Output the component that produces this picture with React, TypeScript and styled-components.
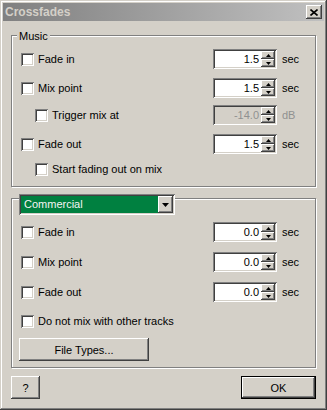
import styled, { createGlobalStyle } from "styled-components";

const face = "#d4d0c8";

const GlobalStyle = createGlobalStyle`
  body {
    margin: 0;
    background: ${face};
  }
`;

const raised = `
  box-shadow: inset -1px -1px #404040, inset 1px 1px #fff, inset -2px -2px #808080;
`;

const sunken = `
  box-shadow: inset 1px 1px #808080, inset -1px -1px #fff, inset 2px 2px #404040, inset -2px -2px ${face};
`;

interface IRow {
  label: string;
  value?: string;
  unit?: string;
  indent?: boolean;
  disabled?: boolean;
  mt: number;
}

const musicRows: IRow[] = [
  { label: "Fade in", value: "1.5", unit: "sec", mt: 6 },
  { label: "Mix point", value: "1.5", unit: "sec", mt: 9 },
  { label: "Trigger mix at", value: "-14.0", unit: "dB", indent: true, disabled: true, mt: 7 },
  { label: "Fade out", value: "1.5", unit: "sec", mt: 9 },
  { label: "Start fading out on mix", indent: true, mt: 5 },
];

const typeRows: IRow[] = [
  { label: "Fade in", value: "0.0", unit: "sec", mt: 7 },
  { label: "Mix point", value: "0.0", unit: "sec", mt: 10 },
  { label: "Fade out", value: "0.0", unit: "sec", mt: 10 },
  { label: "Do not mix with other tracks", mt: 9 },
];

const Arrow = ({ up, w = 5 }: { up?: boolean; w?: number }) => {
  const h = Math.ceil(w / 2);
  return (
    <svg width={w} height={h} viewBox={`0 0 ${w} ${h}`}>
      <polygon
        points={up ? `0,${h} ${w},${h} ${w / 2},0` : `0,0 ${w},0 ${w / 2},${h}`}
        fill="#000"
      />
    </svg>
  );
};

const OptionRow = ({ row }: { row: IRow }) => (
  <Row $mt={row.mt}>
    <CheckLabel $indent={row.indent}>
      <Box />
      <span>{row.label}</span>
    </CheckLabel>
    {row.value && (
      <>
        <SpinBox $disabled={row.disabled}>
          <SpinValue $disabled={row.disabled}>{row.value}</SpinValue>
          <SpinButtons>
            <SpinButton><Arrow up /></SpinButton>
            <SpinButton><Arrow /></SpinButton>
          </SpinButtons>
        </SpinBox>
        <Unit $disabled={row.disabled}>{row.unit}</Unit>
      </>
    )}
  </Row>
);

const App = () => (
  <>
    <GlobalStyle />
    <Window>
      <TitleBar>
        <Title>Crossfades</Title>
        <CloseButton>
          <svg width="8" height="7" viewBox="0 0 8 7">
            <path d="M0.5 0.5 L7.5 6.5 M7.5 0.5 L0.5 6.5" stroke="#000" strokeWidth="1.6" />
          </svg>
        </CloseButton>
      </TitleBar>
      <Body>
        <Group $mt={14} $pb={7}>
          <Legend>Music</Legend>
          {musicRows.map((r) => (
            <OptionRow key={r.label} row={r} />
          ))}
        </Group>
        <Group $mt={11} $pb={6}>
          <Combo>
            <ComboText>Commercial</ComboText>
            <ComboButton><Arrow w={7} /></ComboButton>
          </Combo>
          {typeRows.map((r) => (
            <OptionRow key={r.label} row={r} />
          ))}
          <Button $width={130} $mt={7} $ml={-2}>File Types...</Button>
        </Group>
        <Footer>
          <Button $width={29}>?</Button>
          <Button $width={75} $default>OK</Button>
        </Footer>
      </Body>
    </Window>
  </>
);

export default App;

const Window = styled.div`
  width: 327px;
  height: 410px;
  box-sizing: border-box;
  padding: 3px;
  background: ${face};
  box-shadow: inset -1px -1px #404040, inset 1px 1px ${face}, inset -2px -2px #808080, inset 2px 2px #fff;
  display: flex;
  flex-direction: column;
  font-family: "Liberation Sans", Arial, sans-serif;
  font-size: 11px;
  color: #000;
`;

const TitleBar = styled.div`
  height: 18px;
  background: linear-gradient(to right, #808080, #c0c0c0);
  display: flex;
  align-items: center;
  justify-content: space-between;
  padding: 0 2px;
`;

const Title = styled.span`
  color: ${face};
  font-weight: bold;
  font-size: 12px;
`;

const CloseButton = styled.div`
  width: 16px;
  height: 14px;
  background: ${face};
  ${raised}
  display: flex;
  align-items: center;
  justify-content: center;
`;

const Body = styled.div`
  display: flex;
  flex-direction: column;
  padding: 0 8px;
`;

const Group = styled.div<{ $mt: number; $pb: number }>`
  display: flex;
  flex-direction: column;
  margin-top: ${({ $mt }) => $mt}px;
  padding: 0 0 ${({ $pb }) => $pb}px 9px;
  border: 1px solid #808080;
  box-shadow: inset 1px 1px #fff, 1px 1px #fff;
`;

const Legend = styled.div`
  align-self: flex-start;
  margin: -7px 0 0 -4px;
  padding: 0 2px;
  height: 14px;
  line-height: 14px;
  background: ${face};
`;

const Row = styled.div<{ $mt: number }>`
  display: grid;
  grid-template-columns: 192px 64px 1fr;
  align-items: center;
  height: 20px;
  margin-top: ${({ $mt }) => $mt}px;
`;

const CheckLabel = styled.label<{ $indent?: boolean }>`
  display: flex;
  align-items: center;
  gap: 4px;
  padding-left: ${({ $indent }) => ($indent ? 14 : 0)}px;
  white-space: nowrap;
`;

const Box = styled.span`
  width: 13px;
  height: 13px;
  flex-shrink: 0;
  background: #fff;
  ${sunken}
`;

const SpinBox = styled.div<{ $disabled?: boolean }>`
  width: 64px;
  height: 20px;
  box-sizing: border-box;
  padding: 2px;
  display: flex;
  background: ${({ $disabled }) => ($disabled ? face : "#fff")};
  ${sunken}
`;

const SpinValue = styled.span<{ $disabled?: boolean }>`
  flex: 1;
  text-align: right;
  padding-right: 2px;
  line-height: 16px;
  color: ${({ $disabled }) => ($disabled ? "#909090" : "#000")};
`;

const SpinButtons = styled.div`
  width: 14px;
  display: flex;
  flex-direction: column;
`;

const SpinButton = styled.div`
  height: 8px;
  background: ${face};
  ${raised}
  display: flex;
  align-items: center;
  justify-content: center;
`;

const Unit = styled.span<{ $disabled?: boolean }>`
  padding-left: 5px;
  color: ${({ $disabled }) => ($disabled ? "#909090" : "#000")};
`;

const Combo = styled.div`
  align-self: flex-start;
  width: 156px;
  height: 21px;
  box-sizing: border-box;
  margin: -5px 0 0 -2px;
  padding: 2px;
  display: flex;
  background: #fff;
  ${sunken}
`;

const ComboText = styled.span`
  flex: 1;
  background: #008040;
  color: #f4f4f4;
  padding-left: 3px;
  line-height: 17px;
`;

const ComboButton = styled.div`
  width: 15px;
  background: ${face};
  ${raised}
  display: flex;
  align-items: center;
  justify-content: center;
`;

const Button = styled.div<{ $width: number; $mt?: number; $ml?: number; $default?: boolean }>`
  width: ${({ $width }) => $width}px;
  height: 23px;
  margin-top: ${({ $mt }) => $mt ?? 0}px;
  margin-left: ${({ $ml }) => $ml ?? 0}px;
  display: flex;
  align-items: center;
  justify-content: center;
  background: ${face};
  box-shadow: ${({ $default }) =>
    $default
      ? "inset 0 0 0 1px #000, inset -2px -2px #404040, inset 2px 2px #fff, inset -3px -3px #808080"
      : "inset -1px -1px #404040, inset 1px 1px #fff, inset -2px -2px #808080"};
  align-self: flex-start;
`;

const Footer = styled.div`
  display: flex;
  justify-content: space-between;
  margin-top: 8px;
`;
